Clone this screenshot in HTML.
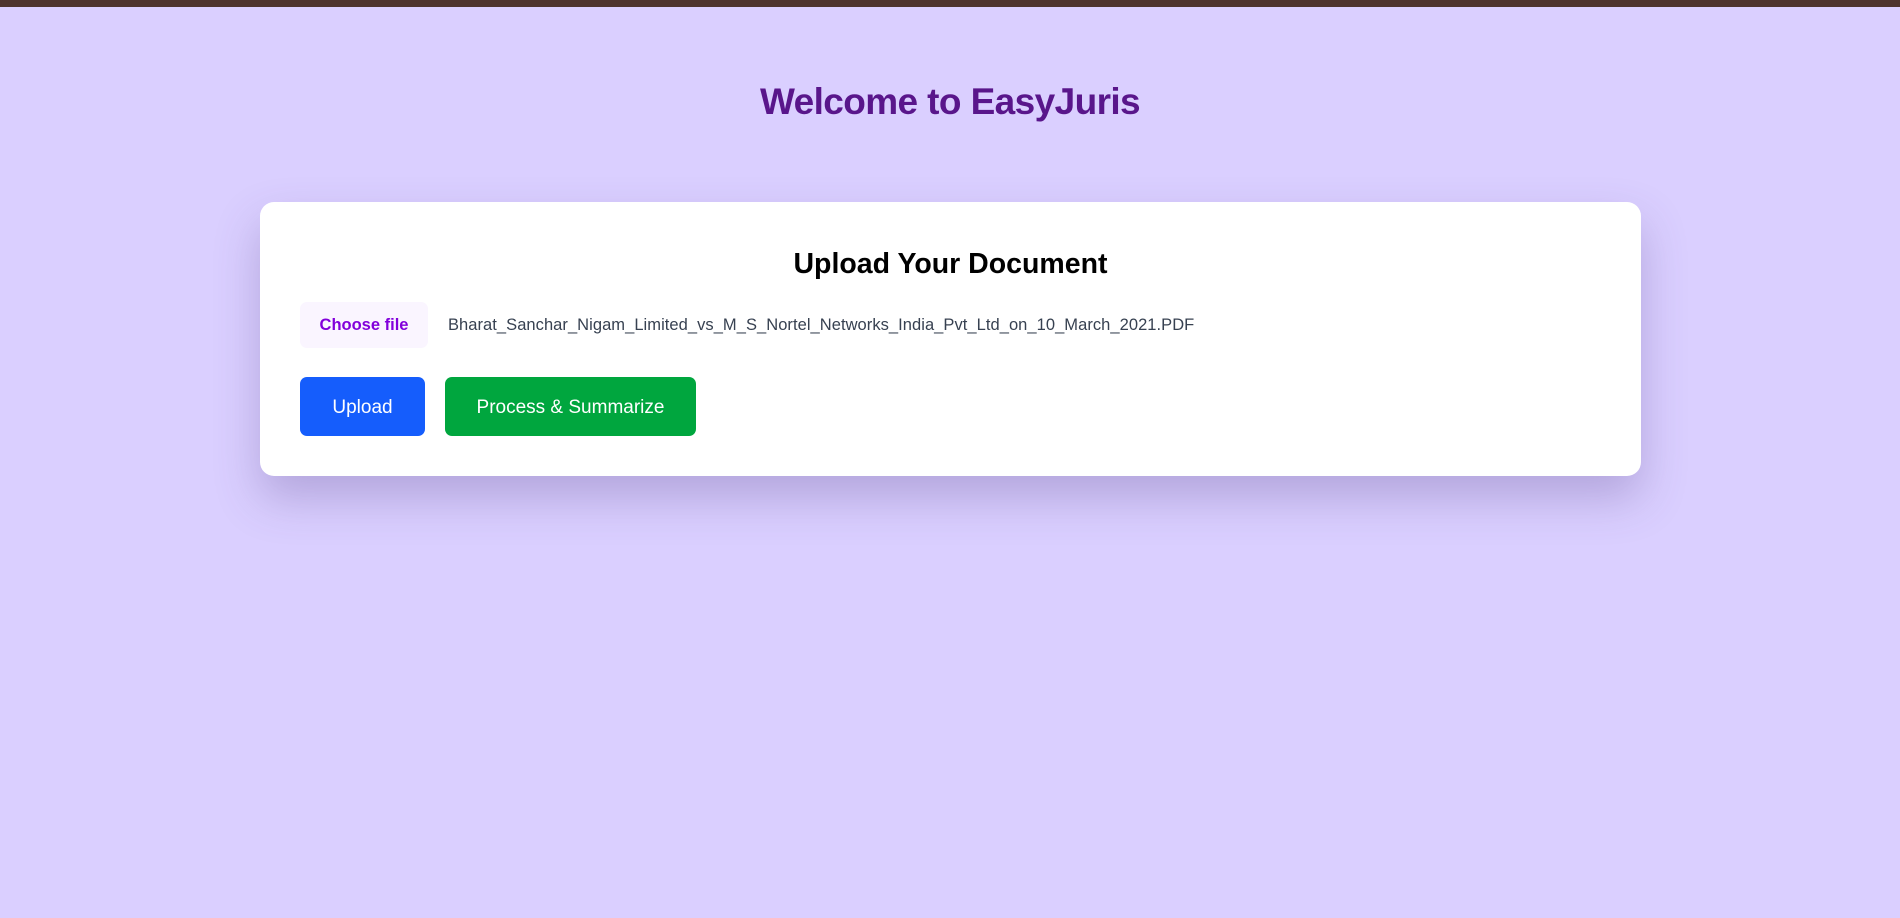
<!DOCTYPE html>
<html><head><meta charset="utf-8"><style>
*{box-sizing:border-box;margin:0;padding:0}
html,body{width:1900px;height:918px;overflow:hidden}
body{background:#dacfff;font-family:"Segoe UI","Liberation Sans",sans-serif;position:relative}
.bar{position:absolute;left:0;top:0;width:1900px;height:7px;background:#4e342e}
h1{position:absolute;top:77px;left:0;width:1900px;text-align:center;font-size:37px;font-weight:700;color:#59168b;line-height:50px;letter-spacing:-0.6px}
.card{position:absolute;left:260px;top:202px;width:1381px;height:274px;background:#fff;border-radius:14px;box-shadow:0 22px 45px rgba(90,70,140,0.3)}
h2{position:absolute;top:244px;left:260px;width:1381px;text-align:center;font-size:28.5px;font-weight:700;color:#000;line-height:40px}
.choose{position:absolute;left:300px;top:302px;width:128px;height:46px;background:#faf5ff;border-radius:7px;color:#8200db;font-size:16.5px;font-weight:600;line-height:46px;text-align:center}
.fname{position:absolute;left:448px;top:313px;font-size:16.5px;color:#374151;line-height:24px;letter-spacing:0.05px}
.btn{position:absolute;top:377px;height:59px;border-radius:7px;color:#fff;font-size:19px;line-height:61px;text-align:center}
.up{left:300px;width:125px;background:#155dfc}
.pr{left:445px;width:251px;background:#00a63e}
</style></head><body>
<div class="bar"></div>
<h1>Welcome to EasyJuris</h1>
<div class="card"></div>
<h2>Upload Your Document</h2>
<div class="choose">Choose file</div>
<div class="fname">Bharat_Sanchar_Nigam_Limited_vs_M_S_Nortel_Networks_India_Pvt_Ltd_on_10_March_2021.PDF</div>
<div class="btn up">Upload</div>
<div class="btn pr">Process &amp; Summarize</div>
</body></html>
